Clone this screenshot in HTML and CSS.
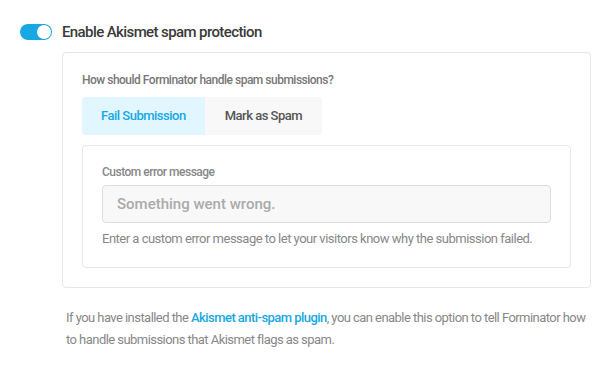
FILE: index.html
```html
<!DOCTYPE html>
<html lang="en">
<head>
<meta charset="utf-8">
<title>Akismet</title>
<link rel="stylesheet" href="styles.css">
</head>
<body>
<div class="page">
  <div class="toggle-row">
    <span class="toggle"><span class="knob"></span></span>
    <span class="toggle-label">Enable Akismet spam protection</span>
  </div>
  <div class="box">
    <div class="label">How should Forminator handle spam submissions?</div>
    <div class="tabs">
      <div class="tab active">Fail Submission</div>
      <div class="tab">Mark as Spam</div>
    </div>
    <div class="inner">
      <div class="label small">Custom error message</div>
      <div class="input">Something went wrong.</div>
      <div class="desc">Enter a custom error message to let your visitors know why the submission failed.</div>
    </div>
  </div>
  <p class="note">If you have installed the <a href="#" class="link">Akismet anti-spam plugin</a>, you can enable this option to tell Forminator how to handle submissions that Akismet flags as spam.</p>
</div>
</body>
</html>
```
FILE: styles.css
```css
html, body {
  margin: 0;
  padding: 0;
  background: #fff;
}
body {
  font-family: Roboto, "Liberation Sans", sans-serif;
  color: #333;
  letter-spacing: -0.5px;
}
.page {
  padding: 21px 20px 0 20px;
}
.toggle-row {
  display: flex;
  align-items: center;
  height: 22px;
}
.toggle {
  position: relative;
  width: 32px;
  height: 16px;
  border-radius: 8px;
  background: #17a8e3;
  margin-right: 10px;
  flex: none;
}
.knob {
  position: absolute;
  top: 1px;
  right: 1px;
  width: 14px;
  height: 14px;
  border-radius: 50%;
  background: #fff;
}
.toggle-label {
  font-size: 15px;
  font-weight: 500;
  line-height: 22px;
  color: #3a3a3a;
  letter-spacing: -0.6px;
}
.box {
  margin: 9px 0 0 42px;
  width: 489px;
  padding: 19px;
  border: 1px solid #e6e6e6;
  border-radius: 4px;
}
.label {
  font-size: 12px;
  font-weight: 500;
  line-height: 16px;
  color: #777;
  margin-bottom: 9px;
}
.label.small {
  color: #888;
  margin-bottom: 5px;
}
.tabs {
  display: inline-flex;
  border-radius: 4px;
  overflow: hidden;
  background: #f8f8f8;
}
.tab {
  padding: 8px 20px;
  font-size: 13px;
  font-weight: 500;
  line-height: 22px;
  color: #555;
  background: #f8f8f8;
}
.tab.active {
  background: #e1f6ff;
  color: #17a8e3;
  padding: 8px 19px;
}
.inner {
  margin-top: 10px;
  border: 1px solid #e6e6e6;
  border-radius: 4px;
  padding: 18px 19px 17px 19px;
}
.input {
  border: 1px solid #ddd;
  border-radius: 4px;
  background: #f8f8f8;
  padding: 8px 14px;
  font-size: 15px;
  font-weight: 500;
  line-height: 20px;
  color: #aaa;
  letter-spacing: 0;
}
.desc {
  margin-top: 5px;
  font-size: 13px;
  line-height: 22px;
  color: #888;
}
.note {
  margin: 19px 0 0 46px;
  width: 525px;
  font-size: 13px;
  line-height: 22px;
  color: #888;
  letter-spacing: -0.55px;
}
.link {
  color: #17a8e3;
  font-weight: 500;
  text-decoration: none;
}
```
